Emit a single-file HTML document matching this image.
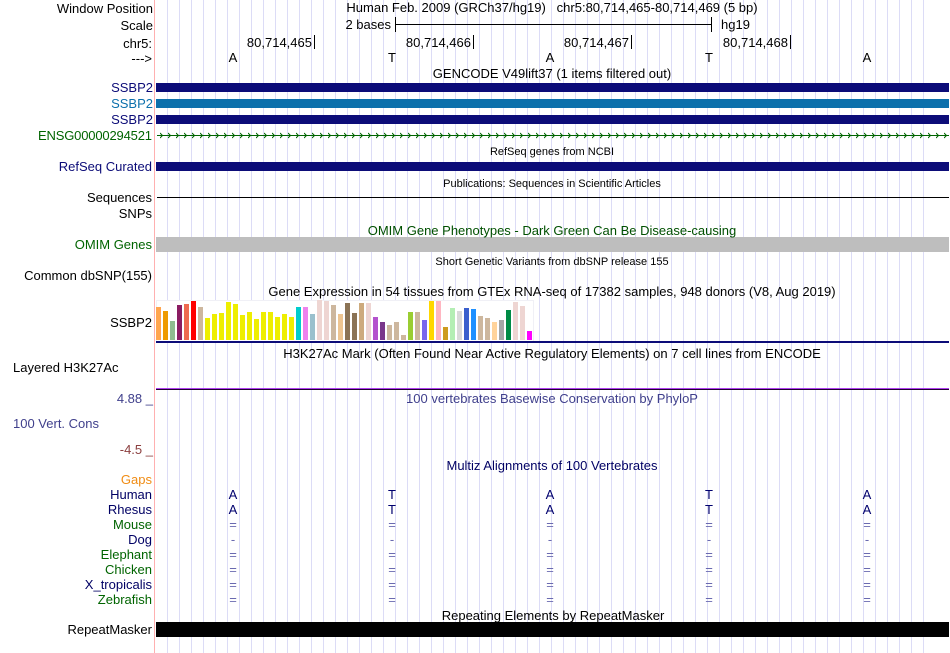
<!DOCTYPE html>
<html>
<head>
<meta charset="utf-8">
<title>Genome Browser</title>
<style>
html,body{margin:0;padding:0;background:#fff;width:950px;height:653px;overflow:hidden}
svg{display:block;position:absolute;left:0;top:0}
text{font-family:"Liberation Sans",sans-serif;font-size:13px;fill:#000}
.r{text-anchor:end}
.c{text-anchor:middle}
.s{font-size:11px}
.n{fill:#0c0c78}
.g{fill:#006400}
.h{fill:#000064}
.e{fill:#6a6ab0}
.d{fill:#00006e}
</style>
</head>
<body>
<svg width="950" height="653" viewBox="0 0 950 653" xmlns="http://www.w3.org/2000/svg" shape-rendering="crispEdges">
<defs>
<pattern id="chev" x="160" y="131" width="8" height="9" patternUnits="userSpaceOnUse"><path d="M0 2L2.5 4.5L0 7" fill="none" stroke="#006400" stroke-width="1" shape-rendering="auto"/></pattern>
</defs>
<rect width="950" height="653" fill="#fff"/>
<path d="M167.5 0v653m12-653v653m12-653v653m12-653v653m12-653v653m12-653v653m12-653v653m12-653v653m12-653v653m12-653v653m12-653v653m12-653v653m12-653v653m12-653v653m12-653v653m12-653v653m12-653v653m12-653v653m12-653v653m12-653v653m12-653v653m12-653v653m12-653v653m12-653v653m12-653v653m12-653v653m12-653v653m12-653v653m12-653v653m12-653v653m12-653v653m12-653v653m12-653v653m12-653v653m12-653v653m12-653v653m12-653v653m12-653v653m12-653v653m12-653v653m12-653v653m12-653v653m12-653v653m12-653v653m12-653v653m12-653v653m12-653v653m12-653v653m12-653v653m12-653v653m12-653v653m12-653v653m12-653v653m12-653v653m12-653v653m12-653v653m12-653v653m12-653v653m12-653v653m12-653v653m12-653v653m12-653v653m12-653v653m12-653v653" fill="none" stroke="#dcdcf6" stroke-width="1"/>
<rect x="154" y="0" width="1" height="653" fill="#ffb0b0"/>

<rect x="156" y="83" width="793" height="9" fill="#0c0c78"/>
<rect x="156" y="99" width="793" height="9" fill="#0c70ac"/>
<rect x="156" y="115" width="793" height="9" fill="#0c0c78"/>
<rect x="157" y="135" width="792" height="1" fill="#006400"/>
<rect x="160" y="131" width="789" height="9" fill="url(#chev)"/>
<rect x="156" y="162" width="793" height="9" fill="#0c0c78"/>
<rect x="157" y="197" width="792" height="1" fill="#000"/>
<rect x="156" y="237" width="793" height="15" fill="#bebebe"/>
<rect x="156" y="622" width="793" height="15" fill="#000"/>

<rect x="156.5" y="300.5" width="377" height="41" fill="#fff" stroke="#f0f0f6"/>
<rect x="156" y="341" width="793" height="2" fill="#0c0c78"/>
<g>
<rect x="156" y="307" width="5" height="33" fill="#FFA54F"/>
<rect x="163" y="311" width="5" height="29" fill="#EE9A00"/>
<rect x="170" y="321" width="5" height="19" fill="#8FBC8F"/>
<rect x="177" y="305" width="5" height="35" fill="#8B1C62"/>
<rect x="184" y="304" width="5" height="36" fill="#EE6A50"/>
<rect x="191" y="301" width="5" height="39" fill="#FF0000"/>
<rect x="198" y="307" width="5" height="33" fill="#CDB79E"/>
<rect x="205" y="318" width="5" height="22" fill="#EEEE00"/>
<rect x="212" y="314" width="5" height="26" fill="#EEEE00"/>
<rect x="219" y="313" width="5" height="27" fill="#EEEE00"/>
<rect x="226" y="302" width="5" height="38" fill="#EEEE00"/>
<rect x="233" y="304" width="5" height="36" fill="#EEEE00"/>
<rect x="240" y="315" width="5" height="25" fill="#EEEE00"/>
<rect x="247" y="312" width="5" height="28" fill="#EEEE00"/>
<rect x="254" y="319" width="5" height="21" fill="#EEEE00"/>
<rect x="261" y="312" width="5" height="28" fill="#EEEE00"/>
<rect x="268" y="312" width="5" height="28" fill="#EEEE00"/>
<rect x="275" y="317" width="5" height="23" fill="#EEEE00"/>
<rect x="282" y="314" width="5" height="26" fill="#EEEE00"/>
<rect x="289" y="317" width="5" height="23" fill="#EEEE00"/>
<rect x="296" y="307" width="5" height="33" fill="#00CDCD"/>
<rect x="303" y="307" width="5" height="33" fill="#EE82EE"/>
<rect x="310" y="314" width="5" height="26" fill="#9AC0CD"/>
<rect x="317" y="300" width="5" height="40" fill="#EED5D2"/>
<rect x="324" y="301" width="5" height="39" fill="#EED5D2"/>
<rect x="331" y="305" width="5" height="35" fill="#CDB79E"/>
<rect x="338" y="314" width="5" height="26" fill="#EEC591"/>
<rect x="345" y="303" width="5" height="37" fill="#8B7355"/>
<rect x="352" y="313" width="5" height="27" fill="#8B7355"/>
<rect x="359" y="303" width="5" height="37" fill="#CDAA7D"/>
<rect x="366" y="303" width="5" height="37" fill="#EED5D2"/>
<rect x="373" y="317" width="5" height="23" fill="#B452CD"/>
<rect x="380" y="322" width="5" height="18" fill="#7A378B"/>
<rect x="387" y="325" width="5" height="15" fill="#CDB79E"/>
<rect x="394" y="322" width="5" height="18" fill="#CDB79E"/>
<rect x="401" y="335" width="5" height="5" fill="#CDB79E"/>
<rect x="408" y="312" width="5" height="28" fill="#9ACD32"/>
<rect x="415" y="312" width="5" height="28" fill="#CDB79E"/>
<rect x="422" y="320" width="5" height="20" fill="#7A67EE"/>
<rect x="429" y="301" width="5" height="39" fill="#FFD700"/>
<rect x="436" y="301" width="5" height="39" fill="#FFB6C1"/>
<rect x="443" y="327" width="5" height="13" fill="#CD9B1D"/>
<rect x="450" y="308" width="5" height="32" fill="#B4EEB4"/>
<rect x="457" y="311" width="5" height="29" fill="#D9D9D9"/>
<rect x="464" y="308" width="5" height="32" fill="#3A5FCD"/>
<rect x="471" y="309" width="5" height="31" fill="#1E90FF"/>
<rect x="478" y="316" width="5" height="24" fill="#CDB79E"/>
<rect x="485" y="318" width="5" height="22" fill="#CDB79E"/>
<rect x="492" y="322" width="5" height="18" fill="#FFD39B"/>
<rect x="499" y="320" width="5" height="20" fill="#A6A6A6"/>
<rect x="506" y="310" width="5" height="30" fill="#008B45"/>
<rect x="513" y="302" width="5" height="38" fill="#EED5D2"/>
<rect x="520" y="306" width="5" height="34" fill="#EED5D2"/>
<rect x="527" y="331" width="5" height="9" fill="#FF00FF"/>
</g>

<rect x="156" y="388" width="793" height="1" fill="#b040f0"/>
<rect x="156" y="389" width="793" height="1" fill="#200030"/>

<rect x="395" y="24" width="316" height="1" fill="#000"/>
<rect x="395" y="17" width="1" height="15" fill="#000"/>
<rect x="711" y="17" width="1" height="15" fill="#000"/>
<rect x="314" y="35" width="1" height="14" fill="#000"/>
<rect x="473" y="35" width="1" height="14" fill="#000"/>
<rect x="631" y="35" width="1" height="14" fill="#000"/>
<rect x="790" y="35" width="1" height="14" fill="#000"/>

<g shape-rendering="auto">
<text class="r" x="153" y="13">Window Position</text>
<text class="r" x="153" y="30">Scale</text>
<text class="r" x="152" y="48">chr5:</text>
<text class="r" x="152" y="63">---&gt;</text>
<text class="r n" x="153" y="92">SSBP2</text>
<text class="r" x="153" y="108" style="fill:#0c70ac">SSBP2</text>
<text class="r n" x="153" y="124">SSBP2</text>
<text class="r g" x="152" y="140" textLength="114" lengthAdjust="spacing">ENSG00000294521</text>
<text class="r n" x="152" y="171">RefSeq Curated</text>
<text class="r" x="152" y="202">Sequences</text>
<text class="r" x="152" y="218">SNPs</text>
<text class="r g" x="152" y="249">OMIM Genes</text>
<text class="r" x="152" y="280">Common dbSNP(155)</text>
<text class="r" x="152" y="327">SSBP2</text>
<text x="13" y="372">Layered H3K27Ac</text>
<text class="r" x="153" y="403" style="fill:#40408c">4.88 _</text>
<text x="13" y="428" style="fill:#40408c">100 Vert. Cons</text>
<text class="r" x="153" y="454" style="fill:#8c4040">-4.5 _</text>
<text class="r" x="152" y="484" style="fill:#f08c14">Gaps</text>
<text class="r h" x="152" y="499">Human</text>
<text class="r h" x="152" y="514">Rhesus</text>
<text class="r g" x="152" y="529">Mouse</text>
<text class="r h" x="152" y="544">Dog</text>
<text class="r g" x="152" y="559">Elephant</text>
<text class="r g" x="152" y="574">Chicken</text>
<text class="r h" x="152" y="589">X_tropicalis</text>
<text class="r g" x="152" y="604">Zebrafish</text>
<text class="r" x="152" y="634">RepeatMasker</text>

<text class="c" x="552" y="12" xml:space="preserve">Human Feb. 2009 (GRCh37/hg19) &#160; chr5:80,714,465-80,714,469 (5 bp)</text>
<text class="r" x="391" y="29">2 bases</text>
<text x="721" y="29">hg19</text>
<text class="r" x="312" y="47">80,714,465</text>
<text class="r" x="471" y="47">80,714,466</text>
<text class="r" x="629" y="47">80,714,467</text>
<text class="r" x="788" y="47">80,714,468</text>
<text class="c" x="233" y="62">A</text>
<text class="c" x="392" y="62">T</text>
<text class="c" x="550" y="62">A</text>
<text class="c" x="709" y="62">T</text>
<text class="c" x="867" y="62">A</text>

<text class="c" x="552" y="78">GENCODE V49lift37 (1 items filtered out)</text>
<text class="c s" x="552" y="155">RefSeq genes from NCBI</text>
<text class="c s" x="552" y="187">Publications: Sequences in Scientific Articles</text>
<text class="c" x="552" y="235" style="fill:#005000">OMIM Gene Phenotypes - Dark Green Can Be Disease-causing</text>
<text class="c s" x="552" y="265">Short Genetic Variants from dbSNP release 155</text>
<text class="c" x="552" y="296">Gene Expression in 54 tissues from GTEx RNA-seq of 17382 samples, 948 donors (V8, Aug 2019)</text>
<text class="c" x="552" y="358">H3K27Ac Mark (Often Found Near Active Regulatory Elements) on 7 cell lines from ENCODE</text>
<text class="c" x="552" y="403" style="fill:#40408c">100 vertebrates Basewise Conservation by PhyloP</text>
<text class="c" x="552" y="470" style="fill:#000064">Multiz Alignments of 100 Vertebrates</text>
<text class="c" x="553" y="620">Repeating Elements by RepeatMasker</text>

<g class="base">
<text class="c d" x="233" y="499">A</text><text class="c d" x="392" y="499">T</text><text class="c d" x="550" y="499">A</text><text class="c d" x="709" y="499">T</text><text class="c d" x="867" y="499">A</text>
<text class="c d" x="233" y="514">A</text><text class="c d" x="392" y="514">T</text><text class="c d" x="550" y="514">A</text><text class="c d" x="709" y="514">T</text><text class="c d" x="867" y="514">A</text>
<text class="c e" x="233" y="529">=</text><text class="c e" x="392" y="529">=</text><text class="c e" x="550" y="529">=</text><text class="c e" x="709" y="529">=</text><text class="c e" x="867" y="529">=</text>
<text class="c e" x="233" y="544">-</text><text class="c e" x="392" y="544">-</text><text class="c e" x="550" y="544">-</text><text class="c e" x="709" y="544">-</text><text class="c e" x="867" y="544">-</text>
<text class="c e" x="233" y="559">=</text><text class="c e" x="392" y="559">=</text><text class="c e" x="550" y="559">=</text><text class="c e" x="709" y="559">=</text><text class="c e" x="867" y="559">=</text>
<text class="c e" x="233" y="574">=</text><text class="c e" x="392" y="574">=</text><text class="c e" x="550" y="574">=</text><text class="c e" x="709" y="574">=</text><text class="c e" x="867" y="574">=</text>
<text class="c e" x="233" y="589">=</text><text class="c e" x="392" y="589">=</text><text class="c e" x="550" y="589">=</text><text class="c e" x="709" y="589">=</text><text class="c e" x="867" y="589">=</text>
<text class="c e" x="233" y="604">=</text><text class="c e" x="392" y="604">=</text><text class="c e" x="550" y="604">=</text><text class="c e" x="709" y="604">=</text><text class="c e" x="867" y="604">=</text>
</g>
</g>
</svg>
</body>
</html>
